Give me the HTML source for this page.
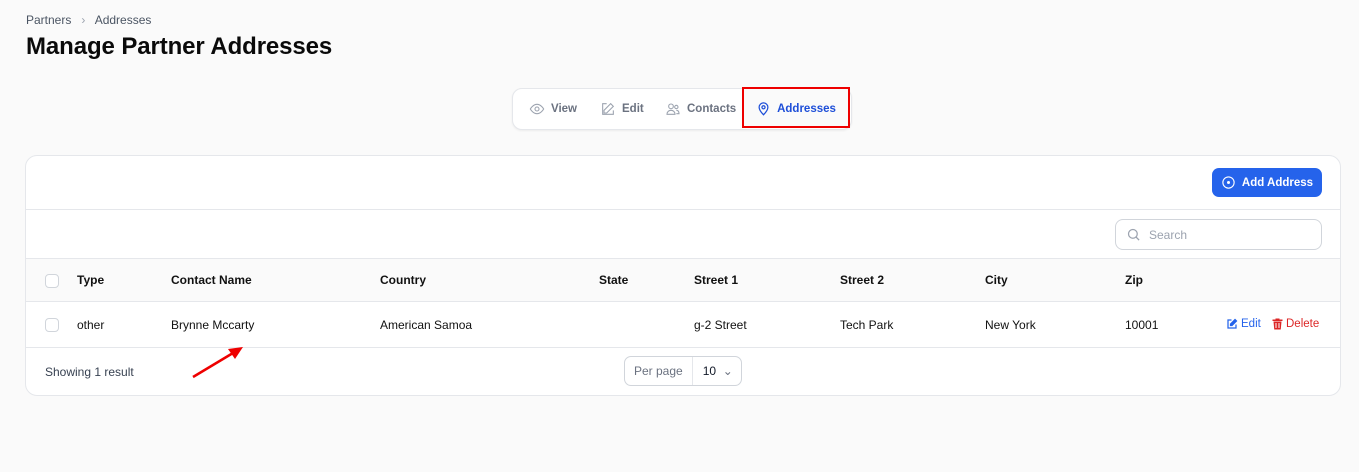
<!DOCTYPE html>
<html><head><style>
*{box-sizing:border-box;margin:0;padding:0}
body{width:1359px;height:472px;background:#fafafa;font-family:"Liberation Sans",sans-serif;color:#111827;position:relative;overflow:hidden}
.a{position:absolute}
.bc{left:26px;top:13px;font-size:12px;color:#4b5563}
h1{position:absolute;left:26px;top:33px;font-size:24px;font-weight:700;color:#0a0a0a;letter-spacing:-0.1px}
.tabs{left:512px;top:88px;width:340px;height:42px;background:#fff;border:1px solid #e5e7eb;border-radius:10px;box-shadow:0 1px 2px rgba(0,0,0,.06)}
.tab{position:absolute;top:0;height:40px;display:flex;align-items:center;font-size:11.5px;font-weight:600;color:#6b7280;gap:6px}
.card{left:25px;top:155px;width:1316px;height:241px;background:#fff;border:1px solid #e5e7eb;border-radius:12px;overflow:hidden}
.hl{position:absolute;left:0;width:100%;height:1px;background:#e5e7eb}
.th{position:absolute;top:117px;font-size:12px;font-weight:700;color:#111}
.td{position:absolute;top:162px;font-size:12px;color:#111}
.cb{position:absolute;left:19px;width:14px;height:14px;border:1px solid #d1d5db;border-radius:4px;background:#fff}
</style></head><body>
<div class="a bc">Partners &nbsp;&nbsp;<span style="color:#9ca3af">&#x203A;</span>&nbsp;&nbsp; Addresses</div>
<h1>Manage Partner Addresses</h1>
<div class="a tabs">
 <div class="tab" style="left:16px"><svg width="16" height="16" viewBox="0 0 24 24" fill="none" stroke="#9ca3af" stroke-width="1.6"><path d="M2 12s4-7 10-7 10 7 10 7-4 7-10 7S2 12 2 12z"/><circle cx="12" cy="12" r="3"/></svg>View</div>
 <div class="tab" style="left:87px"><svg width="16" height="16" viewBox="0 0 24 24" fill="none" stroke="#9ca3af" stroke-width="1.6"><path d="M16 4l4 4-10 10H6v-4z"/><path d="M20 14v6H4V4h6"/></svg>Edit</div>
 <div class="tab" style="left:152px"><svg width="16" height="16" viewBox="0 0 24 24" fill="none" stroke="#9ca3af" stroke-width="1.6"><circle cx="9" cy="8" r="3.5"/><path d="M3 20c0-4 3-6 6-6s6 2 6 6z"/><circle cx="17" cy="9" r="2.5"/><path d="M17 14c2.5 0 4 2 4 5h-4"/></svg>Contacts</div>
 <div class="tab" style="left:229px;top:-2px;height:41px;width:108px;border:2px solid #e00;justify-content:center;color:#1d4ed8;background:#fafafa;padding-top:2px"><svg width="15" height="15" viewBox="0 0 24 24" fill="none" stroke="#1d4ed8" stroke-width="2"><path d="M12 22s7-7 7-12a7 7 0 0 0-14 0c0 5 7 12 7 12z"/><circle cx="12" cy="10" r="2.5"/></svg>Addresses</div>
</div>
<div class="a card">
 <div class="a" style="left:1186px;top:12px;width:110px;height:29px;background:#2563eb;border-radius:7px;color:#fff;font-size:11.5px;font-weight:600;display:flex;align-items:center;justify-content:center;gap:6px"><svg width="15" height="15" viewBox="0 0 24 24" fill="none" stroke="#fff" stroke-width="1.8"><circle cx="12" cy="12" r="9"/><circle cx="12" cy="12" r="1.5" fill="#fff"/></svg>Add Address</div>
 <div class="hl" style="top:53px"></div>
 <div class="a" style="left:1089px;top:63px;width:207px;height:31px;border:1px solid #d1d5db;border-radius:8px;font-size:12px;color:#9ca3af;display:flex;align-items:center;padding-left:10px;gap:8px"><svg width="15" height="15" viewBox="0 0 24 24" fill="none" stroke="#9ca3af" stroke-width="2"><circle cx="11" cy="11" r="7"/><path d="M16 16l5 5"/></svg>Search</div>
 <div class="hl" style="top:102px"></div>
 <div class="a" style="left:0;top:103px;width:100%;height:42px;background:#fafafa"></div>
 <div class="cb" style="top:118px"></div>
 <div class="th" style="left:51px">Type</div><div class="th" style="left:145px">Contact Name</div><div class="th" style="left:354px">Country</div><div class="th" style="left:573px">State</div><div class="th" style="left:668px">Street 1</div><div class="th" style="left:814px">Street 2</div><div class="th" style="left:959px">City</div><div class="th" style="left:1099px">Zip</div>
 <div class="hl" style="top:145px"></div>
 <div class="cb" style="top:162px"></div>
 <div class="td" style="left:51px">other</div><div class="td" style="left:145px">Brynne Mccarty</div><div class="td" style="left:354px">American Samoa</div><div class="td" style="left:668px">g-2 Street</div><div class="td" style="left:814px">Tech Park</div><div class="td" style="left:959px">New York</div><div class="td" style="left:1099px">10001</div>
 <div class="td" style="left:1200px;color:#2563eb;display:flex;align-items:center;gap:3px;font-size:11.5px"><svg width="12" height="12" viewBox="0 0 24 24" fill="none" stroke="#2563eb" stroke-width="2.5"><path d="M11 4H4v16h16v-7"/><path d="M18 3l3 3-9 9H9v-3z" fill="#2563eb"/></svg>Edit</div>
 <div class="td" style="left:1246px;color:#dc2626;display:flex;align-items:center;gap:3px;font-size:11.5px"><svg width="11" height="12" viewBox="0 0 22 24" fill="#dc2626"><path d="M7 1h8v2h6v3H1V3h6z"/><path d="M3 7h16l-1.5 16h-13zM7 10v10h2V10zm6 0v10h2V10z"/></svg>Delete</div>
 <div class="hl" style="top:191px"></div>
 <div class="a" style="left:19px;top:209px;font-size:12px;color:#374151">Showing 1 result</div>
 <div class="a" style="left:598px;top:200px;width:118px;height:30px;border:1px solid #d1d5db;border-radius:7px;font-size:12px;display:flex;align-items:center"><span style="color:#6b7280;padding:0 9px;border-right:1px solid #e5e7eb;height:100%;display:flex;align-items:center">Per page</span><span style="padding-left:10px">10 &nbsp;<span style="color:#6b7280">&#x2304;</span></span></div>
</div>
<svg class="a" style="left:190px;top:344px" width="56" height="36"><path d="M3 33L48 6" stroke="#e00" stroke-width="2.5"/><path d="M53 3l-15 2 7 10z" fill="#e00"/></svg>
</body></html>
